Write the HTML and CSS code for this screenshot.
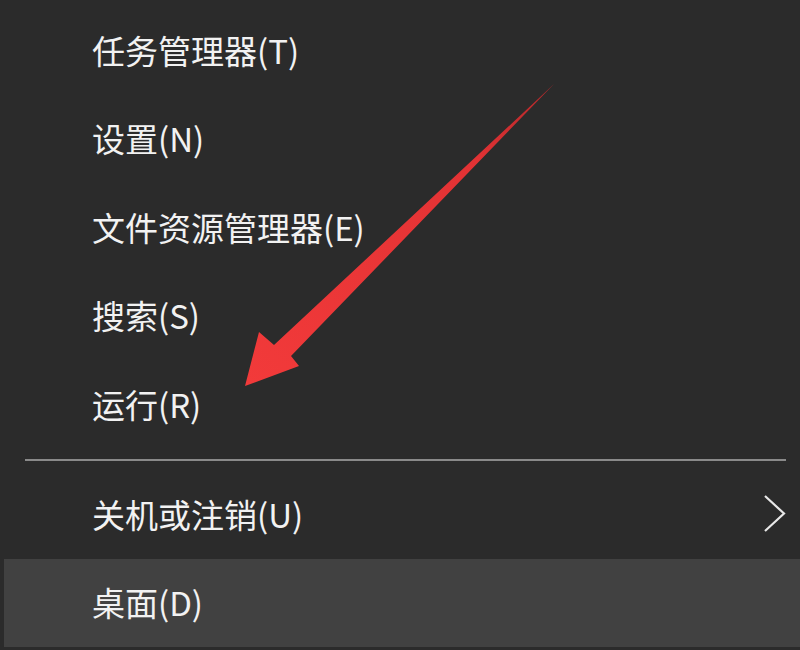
FILE: index.html
```html
<!DOCTYPE html>
<html lang="zh-CN">
<head>
    <meta charset="UTF-8">
    <title>Win+X Menu</title>
    <link rel="stylesheet" href="styles.css">
</head>
<body>
    <div class="menu">
        <div class="item">任务管理器(T)</div>
        <div class="item">设置(N)</div>
        <div class="item">文件资源管理器(E)</div>
        <div class="item">搜索(S)</div>
        <div class="item">运行(R)</div>

        <div class="separator"></div>

        <div class="item has-sub">
            <span>关机或注销(U)</span>
            <svg class="chevron" width="24" height="40" viewBox="0 0 24 40">
                <polyline points="2,2 21,19.5 2,37" fill="none" stroke="#e8e8e8" stroke-width="2.2"/>
            </svg>
        </div>
        <div class="item active">桌面(D)</div>
    </div>

    <!-- red pointer arrow -->
    <svg class="arrow" width="800" height="650" viewBox="0 0 800 650">
        <defs>
            <linearGradient id="shaft" x1="553" y1="85" x2="245" y2="385" gradientUnits="userSpaceOnUse">
                <stop offset="0" stop-color="#b0282a"/>
                <stop offset="0.25" stop-color="#e23234"/>
                <stop offset="1" stop-color="#f23a3a"/>
            </linearGradient>
        </defs>
        <polygon points="554,84 291,356 299,366 245,386 259,332 274,345" fill="url(#shaft)"/>
    </svg>
</body>
</html>
```

FILE: styles.css
```css
html, body {
    margin: 0;
    height: 100%;
}

body {
    background-color: #2b2b2b;
    color: #f2f2f2;
    font-family: "Noto Sans CJK SC", "Noto Sans", sans-serif;
    overflow: hidden;
    position: relative;
}

.menu {
    padding-top: 6px;
}

.item {
    display: flex;
    align-items: center;
    justify-content: space-between;
    height: 88.5px;
    margin-left: 4px;
    padding-left: 88px;
    padding-right: 13px;
    font-size: 33px;
    line-height: 1;
}

.item.active {
    background-color: #414141;
}

.separator {
    height: 2px;
    margin: 10px 14px 9.5px 25px;
    background-color: #8a8a8a;
}

.chevron {
    display: block;
}

.arrow {
    position: absolute;
    top: 0;
    left: 0;
    pointer-events: none;
}
```
